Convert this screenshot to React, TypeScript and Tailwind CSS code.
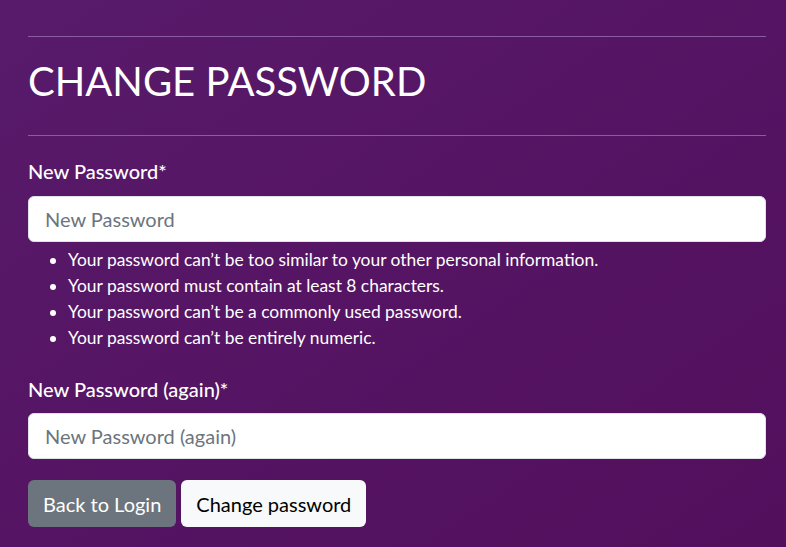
export default function App() {
  return (
    <div
      className="min-h-[547px] w-full bg-gradient-to-br from-[#581a6b] to-[#520f5c] pl-[28px] pr-[20px] pt-[36px] pb-[21px] text-white"
      style={{ fontFamily: "Lato, 'Noto Sans', sans-serif" }}
    >
      <div className="h-px bg-[#8c5ca0]" />
      <h1 className="mt-[20px] mb-[30px] text-[40px] leading-[48px] font-normal">CHANGE PASSWORD</h1>
      <div className="h-px bg-[#8c5ca0]" />
      <form className="pt-[20px]">
        <label className="block text-[20px] leading-[30px] font-medium mb-[10px]">New Password*</label>
        <input
          type="password"
          placeholder="New Password"
          className="block w-full h-[46px] rounded-[6px] bg-white border border-[#dee2e6] px-[16px] text-[20px] text-[#212529] placeholder:text-[#6c757d] outline-none"
        />
        <ul className="list-disc pl-[40px] mt-[5px] text-[17.4px] leading-[26px]">
          <li>Your password can’t be too similar to your other personal information.</li>
          <li>Your password must contain at least 8 characters.</li>
          <li>Your password can’t be a commonly used password.</li>
          <li>Your password can’t be entirely numeric.</li>
        </ul>
        <label className="block mt-[23px] text-[20px] leading-[30px] font-medium mb-[9px]">New Password (again)*</label>
        <input
          type="password"
          placeholder="New Password (again)"
          className="block w-full h-[46px] rounded-[6px] bg-white border border-[#dee2e6] px-[16px] text-[20px] text-[#212529] placeholder:text-[#6c757d] outline-none"
        />
        <div className="mt-[21px] flex gap-[5px]">
          <button type="button" className="h-[47px] rounded-[6px] bg-[#6c757d] px-[15px] text-[20px] text-white">
            Back to Login
          </button>
          <button type="button" className="h-[47px] rounded-[6px] bg-[#f8f9fa] px-[15px] text-[20px] text-black">
            Change password
          </button>
        </div>
      </form>
    </div>
  );
}
